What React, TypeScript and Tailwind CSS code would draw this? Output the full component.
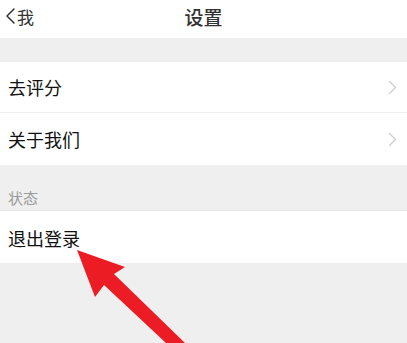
import React from "react";

const Chevron = () => (
  <svg width="9" height="15" viewBox="0 0 9 15" fill="none">
    <path d="M1.5 1.5 L7.5 7.5 L1.5 13.5" stroke="#cdcdcd" strokeWidth="1.3" strokeLinecap="round" strokeLinejoin="round" />
  </svg>
);

export default function App() {
  return (
    <div
      className="relative w-[407px] h-[343px] overflow-hidden bg-[#efefef] flex flex-col"
      style={{ fontFamily: '"Noto Sans CJK SC", "Noto Sans", sans-serif' }}
    >
      <div className="h-[38px] bg-white grid grid-cols-3 items-center pb-[6px]">
        <div className="flex items-center pl-[4px] text-[#333] text-[17px] leading-none">
          <svg width="12" height="18" viewBox="0 0 12 18" fill="none" className="mr-[1px]">
            <path d="M10 2 L3 9 L10 16" stroke="#333" strokeWidth="1.5" strokeLinecap="round" strokeLinejoin="round" />
          </svg>
          <span>我</span>
        </div>
        <div className="text-center text-[19px] leading-none text-[#333] font-medium">设置</div>
        <div />
      </div>
      <div className="h-[24px]" />
      <div className="bg-white">
        <div className="h-[51px] flex items-center justify-between pl-[8px] pr-[10px] border-b border-[#f0f0f0]">
          <span className="text-[18px] text-[#111] leading-none">去评分</span>
          <Chevron />
        </div>
        <div className="h-[52px] flex items-center justify-between pl-[8px] pr-[10px]">
          <span className="text-[18px] text-[#111] leading-none">关于我们</span>
          <Chevron />
        </div>
      </div>
      <div className="h-[46px] flex items-end pl-[8px] pb-[5px] border-b border-[#e6e6e6]">
        <span className="text-[15px] text-[#9a9a9a] leading-none">状态</span>
      </div>
      <div className="h-[52px] bg-white flex items-center pl-[8px] pt-[2px]">
        <span className="text-[18px] text-[#111] leading-none">退出登录</span>
      </div>
      <div className="flex-1" />
      <svg className="absolute left-0 top-0" width="407" height="343" viewBox="0 0 407 343">
        <polygon
          points="77,250 125,267 114,274 185,343 166,343 104,285 95,297"
          fill="#ec1c24"
        />
      </svg>
    </div>
  );
}
